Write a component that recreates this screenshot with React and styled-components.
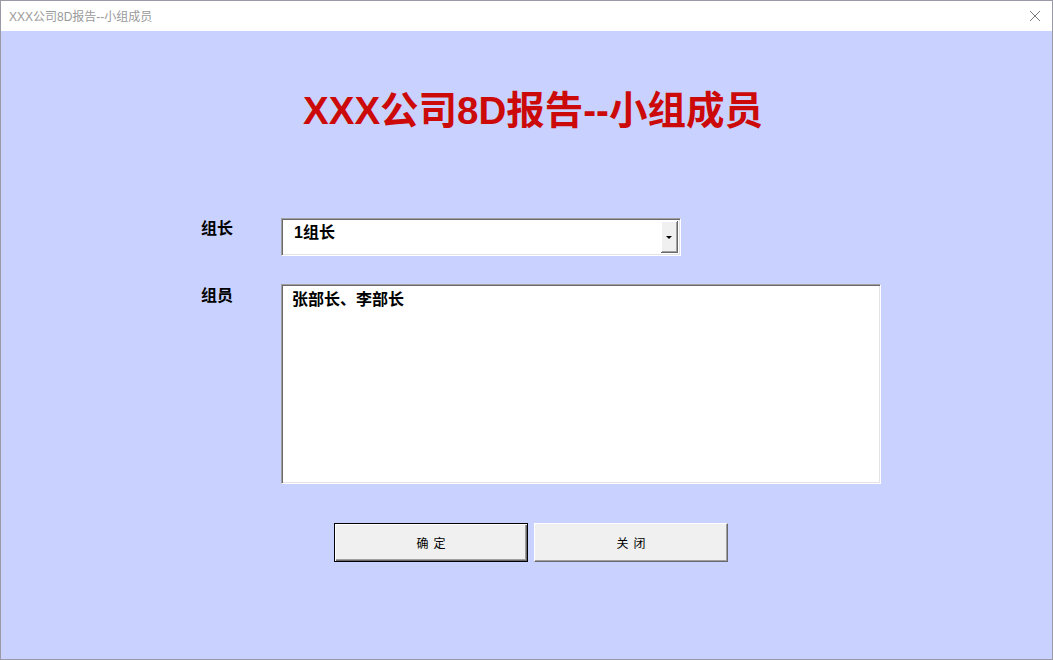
import styled, { createGlobalStyle } from "styled-components";

const GlobalStyle = createGlobalStyle`
  html, body {
    margin: 0;
    padding: 0;
    background: #ffffff;
  }
  body {
    font-family: "Liberation Sans", "Noto Sans CJK SC", sans-serif;
  }
`;

const Ventana = styled.div`
  width: 1053px;
  height: 660px;
  display: flex;
  flex-direction: column;
  box-sizing: border-box;
  border-left: 1px solid #9a9aa6;
  border-right: 1px solid #9a9aa6;
  border-bottom: 1px solid #9a9aa6;
  overflow: hidden;
`;

const BarraTitulo = styled.div`
  height: 31px;
  display: flex;
  align-items: center;
  justify-content: space-between;
  padding: 0 8px 0 8px;
  background: #ffffff;
  border-top: 1px solid #9a9aa6;
  box-sizing: border-box;
`;

const Titulo = styled.span`
  font-family: "Liberation Sans", "Noto Sans CJK SC", sans-serif;
  font-size: 12px;
  color: #9a9a9a;
  margin-top: -1px;
`;

const Cerrar = styled.div`
  width: 14px;
  height: 14px;
  margin-right: 2px;
  display: flex;
  align-items: center;
  justify-content: center;
`;

const Cuerpo = styled.div`
  flex: 1;
  background: #c9d2fe;
  display: flex;
  flex-direction: column;
  padding-top: 60px;
`;

const Encabezado = styled.h1`
  margin: 0;
  text-align: center;
  font-family: "Liberation Sans", "Noto Sans CJK SC", sans-serif;
  font-weight: bold;
  font-size: 38.5px;
  line-height: 40px;
  color: #cc0a0a;
  padding-left: 13px;
`;

const Formulario = styled.div`
  margin: 87px 0 0 200px;
  display: grid;
  grid-template-columns: 80px auto;
  row-gap: 28px;
  align-items: start;
`;

const Etiqueta = styled.div`
  font-family: "Liberation Sans", "Noto Sans CJK SC", sans-serif;
  font-weight: bold;
  font-size: 16px;
  line-height: 20px;
  color: #000;
  padding-top: ${(p) => p.$top}px;
`;

const Hundido = styled.div`
  box-sizing: border-box;
  background: #ffffff;
  border: 1px solid;
  border-color: #a0a0a0 #ffffff #ffffff #a0a0a0;
  box-shadow: inset 1px 1px 0 #696969, inset -1px -1px 0 #e3e3e3;
`;

const Combo = styled(Hundido)`
  width: 400px;
  height: 38px;
  display: flex;
  align-items: stretch;
  padding: 2px;
`;

const ComboTexto = styled.div`
  flex: 1;
  padding: 0 0 0 10px;
  font-family: "Liberation Sans", "Noto Sans CJK SC", sans-serif;
  font-weight: bold;
  font-size: 16px;
  line-height: 24px;
  color: #000;
`;

const BotonFlecha = styled.div`
  width: 17px;
  box-sizing: border-box;
  background: #f0f0f0;
  border-right: 1px solid #696969;
  border-bottom: 1px solid #696969;
  box-shadow: inset 1px 1px 0 #ffffff, inset -1px -1px 0 #a0a0a0;
  display: flex;
  align-items: center;
  justify-content: center;
  padding-top: 2px;
`;

const Flecha = styled.div`
  width: 0;
  height: 0;
  border-left: 3px solid transparent;
  border-right: 3px solid transparent;
  border-top: 3px solid #000;
`;

const AreaTexto = styled(Hundido)`
  width: 600px;
  height: 200px;
  padding: 5px 10px;
  font-family: "Liberation Sans", "Noto Sans CJK SC", sans-serif;
  font-weight: bold;
  font-size: 16px;
  line-height: 20px;
  color: #000;
`;

const FilaBotones = styled.div`
  display: flex;
  gap: 6px;
  margin: 39px 0 0 333px;
`;

const Boton = styled.div`
  width: 194px;
  height: 39px;
  box-sizing: border-box;
  background: #f0f0f0;
  display: flex;
  align-items: center;
  justify-content: center;
  font-family: "Noto Sans CJK SC", sans-serif;
  font-size: 12px;
  letter-spacing: 5px;
  padding-left: 5px;
  color: #000;
  border: 1px solid;
  border-color: ${(p) => (p.$principal ? "#000 #000 #000 #000" : "#ffffff #696969 #696969 #ffffff")};
  box-shadow: ${(p) =>
    p.$principal
      ? "inset 1px 1px 0 #ffffff, inset -1px -1px 0 #696969, inset -2px -2px 0 #a0a0a0"
      : "inset -1px -1px 0 #a0a0a0"};
`;

export default function App() {
  return (
    <>
      <GlobalStyle />
      <Ventana>
        <BarraTitulo>
          <Titulo>XXX公司8D报告--小组成员</Titulo>
          <Cerrar>
            <svg width="12" height="12" viewBox="0 0 12 12">
              <path d="M1 1 L11 11 M11 1 L1 11" stroke="#7a7a7a" strokeWidth="1" fill="none" />
            </svg>
          </Cerrar>
        </BarraTitulo>
        <Cuerpo>
          <Encabezado>XXX公司8D报告--小组成员</Encabezado>
          <Formulario>
            <Etiqueta $top={1}>组长</Etiqueta>
            <Combo>
              <ComboTexto>1组长</ComboTexto>
              <BotonFlecha>
                <Flecha />
              </BotonFlecha>
            </Combo>
            <Etiqueta $top={2}>组员</Etiqueta>
            <AreaTexto>张部长、李部长</AreaTexto>
          </Formulario>
          <FilaBotones>
            <Boton $principal>确定</Boton>
            <Boton>关闭</Boton>
          </FilaBotones>
        </Cuerpo>
      </Ventana>
    </>
  );
}
